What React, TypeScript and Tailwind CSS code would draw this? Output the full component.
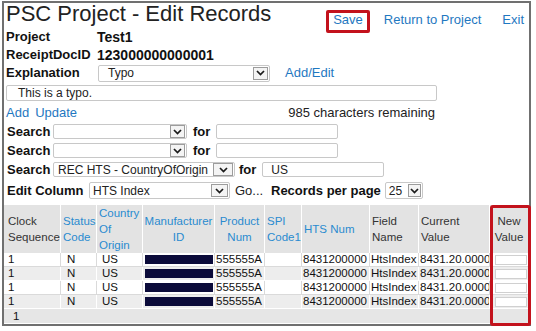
import React from 'react';
import clsx from 'clsx';

const cols = 'grid grid-cols-[57px_36px_46px_72px_50px_37px_68px_49px_71px_38px]';

function Chevron() {
  return (
    <svg width="9" height="6" viewBox="0 0 9 6" fill="none">
      <path d="M1 1 L4.5 4.6 L8 1" stroke="#1a1a1a" strokeWidth="1.7" />
    </svg>
  );
}

function Select({ value, className, textClass = 'pl-[5px]', btnClass = 'w-[15px]' }: {
  value: string;
  className: string;
  textClass?: string;
  btnClass?: string;
}) {
  return (
    <div className={clsx('flex items-center rounded-[2px] border border-[#c8c8c8] bg-white pr-[1px]', className)}>
      <span className={clsx('flex-1 truncate text-[12px] leading-[14px] text-[#222]', textClass)}>{value}</span>
      <span className={clsx('flex h-[13px] items-center justify-center border border-[#9c9c9c] bg-[#f4f4f4]', btnClass)}>
        <Chevron />
      </span>
    </div>
  );
}

function Input({ value = '', className }: { value?: string; className: string }) {
  return (
    <div className={clsx('flex items-center rounded-[2px] border border-[#c8c8c8] bg-white text-[12px] leading-[14px] text-[#222]', className)}>
      {value}
    </div>
  );
}

const rows = [1, 2, 3, 4];

export default function App() {
  return (
    <div className="h-[331px] w-[536px] overflow-hidden bg-white font-['Liberation_Sans',Arial,sans-serif] text-[#111]">
      <div className="ml-[2px] mt-[1px] flex h-[325px] w-[529px] flex-col border-2 border-[#707070]">
        {/* title + links */}
        <div className="flex h-[25px] items-start">
          <h1 className="pl-[2px] text-[22px] leading-[22px] text-[#222]">PSC Project - Edit Records</h1>
          <div className="ml-auto mt-[9px] flex gap-[21px] pr-[5px] text-[13px] leading-[16px] text-[#1f78c1]">
            <span className="relative">
              Save
              <span className="absolute -bottom-[5px] -left-[7px] -right-[7px] -top-[2px] rounded-[2px] border-[3px] border-[#c3121c]" />
            </span>
            <span>Return to Project</span>
            <span>Exit</span>
          </div>
        </div>

        <div className="flex h-[18px] items-center pl-[2px] font-bold">
          <span className="w-[91px] text-[13px] leading-[18px]">Project</span>
          <span className="text-[14px] leading-[18px]">Test1</span>
        </div>
        <div className="flex h-[18px] items-center pl-[2px] font-bold">
          <span className="w-[91px] text-[13px] leading-[18px]">ReceiptDocID</span>
          <span className="text-[14px] leading-[18px]">123000000000001</span>
        </div>
        <div className="flex h-[18px] items-center pl-[2px]">
          <span className="w-[92px] text-[13px] font-bold leading-[18px]">Explanation</span>
          <Select value="Typo" className="h-[17px] w-[172px]" textClass="pl-[9px]" />
          <span className="ml-[15px] text-[13px] leading-[18px] text-[#1f78c1]">Add/Edit</span>
        </div>

        <Input value="This is a typo." className="ml-[2px] mt-[3px] h-[16px] w-[431px] pl-[11px]" />

        <div className="mt-[2px] flex h-[19px] items-center pl-[2px] text-[13px] leading-[19px]">
          <span className="text-[#1f78c1]">Add</span>
          <span className="ml-[6px] text-[#1f78c1]">Update</span>
          <span className="ml-auto mr-[94px] text-[#222]">985 characters remaining</span>
        </div>

        {['', ''].map((v, i) => (
          <div key={i} className="flex h-[19px] items-center pl-[3px] text-[13px] leading-[19px]">
            <span className="w-[46px] font-bold">Search</span>
            <Select value={v} className="h-[15px] w-[134px]" />
            <span className="ml-[6px] font-bold">for</span>
            <Input className="ml-[6px] h-[15px] w-[122px]" />
          </div>
        ))}
        <div className="flex h-[19px] items-center pl-[3px] text-[13px] leading-[19px]">
          <span className="w-[46px] font-bold">Search</span>
          <Select value="REC HTS - CountryOfOrigin" className="h-[15px] w-[182px]" textClass="pl-[4px]" btnClass="w-[20px]" />
          <span className="ml-[4px] font-bold">for</span>
          <Input value="US" className="ml-[6px] h-[15px] w-[122px] pl-[8px]" />
        </div>

        <div className="mt-[1px] flex h-[21px] items-center pl-[3px] text-[13px] leading-[19px]">
          <span className="w-[82px] font-bold">Edit Column</span>
          <Select value="HTS Index" className="h-[17px] w-[141px]" textClass="pl-[3px]" btnClass="w-[17px]" />
          <span className="ml-[5px] w-[36px] text-[#222]">Go...</span>
          <span className="font-bold">Records per page</span>
          <Select value="25" className="ml-[4px] h-[17px] w-[38px]" textClass="pl-[3px]" btnClass="w-[13px]" />
        </div>

        {/* table */}
        <div className="relative mt-[4px] text-[11.5px]">
          <div className={clsx(cols, 'h-[48px] bg-[#e3e3e3] leading-[16px]')}>
            <div className="flex items-center border-r border-white pl-[4px] text-[#333]">Clock<br />Sequence</div>
            <div className="flex items-center border-r border-white pl-[2px] text-[#2a8bd0]">Status<br />Code</div>
            <div className="flex items-center border-r border-white pl-[2px] text-[#2a8bd0]">Country<br />Of<br />Origin</div>
            <div className="flex items-center justify-center border-r border-white text-center text-[#2a8bd0]">Manufacturer<br />ID</div>
            <div className="flex items-center justify-center border-r border-white text-center text-[#2a8bd0]">Product<br />Num</div>
            <div className="flex items-center border-r border-white pl-[2px] text-[#2a8bd0]">SPI<br />Code1</div>
            <div className="flex items-center border-r border-white pl-[2px] text-[#2a8bd0]">HTS Num</div>
            <div className="flex items-center border-r border-white pl-[2px] text-[#333]">Field<br />Name</div>
            <div className="flex items-center border-r border-white pl-[2px] text-[#333]">Current<br />Value</div>
            <div className="flex items-center justify-center text-center text-[#333]">New<br />Value</div>
          </div>
          {rows.map((r) => {
            const odd = r % 2 === 1;
            const cell = clsx('flex items-center overflow-hidden whitespace-nowrap border-r', odd ? 'border-[#dadada]' : 'border-white');
            return (
              <div key={r} className={clsx(cols, 'h-[14px] border-b leading-[13px]', odd ? 'border-[#dadada] bg-white' : 'border-white bg-[#ededed]')}>
                <div className={clsx(cell, 'pl-[4px]')}>1</div>
                <div className={clsx(cell, 'pl-[6px]')}>N</div>
                <div className={clsx(cell, 'pl-[5px]')}>US</div>
                <div className={clsx(cell, 'pl-[2px] pr-[1px]')}>
                  <span className="h-[9px] w-full bg-[#0b0b3a]" />
                </div>
                <div className={clsx(cell, 'pl-[1px]')}>555555A</div>
                <div className={cell} />
                <div className={clsx(cell, 'pl-[1px]')}>8431200000</div>
                <div className={clsx(cell, 'pl-[1px]')}>HtsIndex</div>
                <div className={clsx(cell, 'pl-[1px]')}>8431.20.0000</div>
                <div className="flex items-center pl-[5px]">
                  <span className="h-[10px] w-[32px] border border-[#d0d0d0] bg-white" />
                </div>
              </div>
            );
          })}
          <div className="h-[14px] bg-[#e6e6e6] pl-[9px] leading-[14px]">1</div>
          <div className="absolute left-[486px] top-0 h-[121px] w-[41px] rounded-[3px] border-[3px] border-[#c3121c]" />
        </div>
      </div>
    </div>
  );
}
